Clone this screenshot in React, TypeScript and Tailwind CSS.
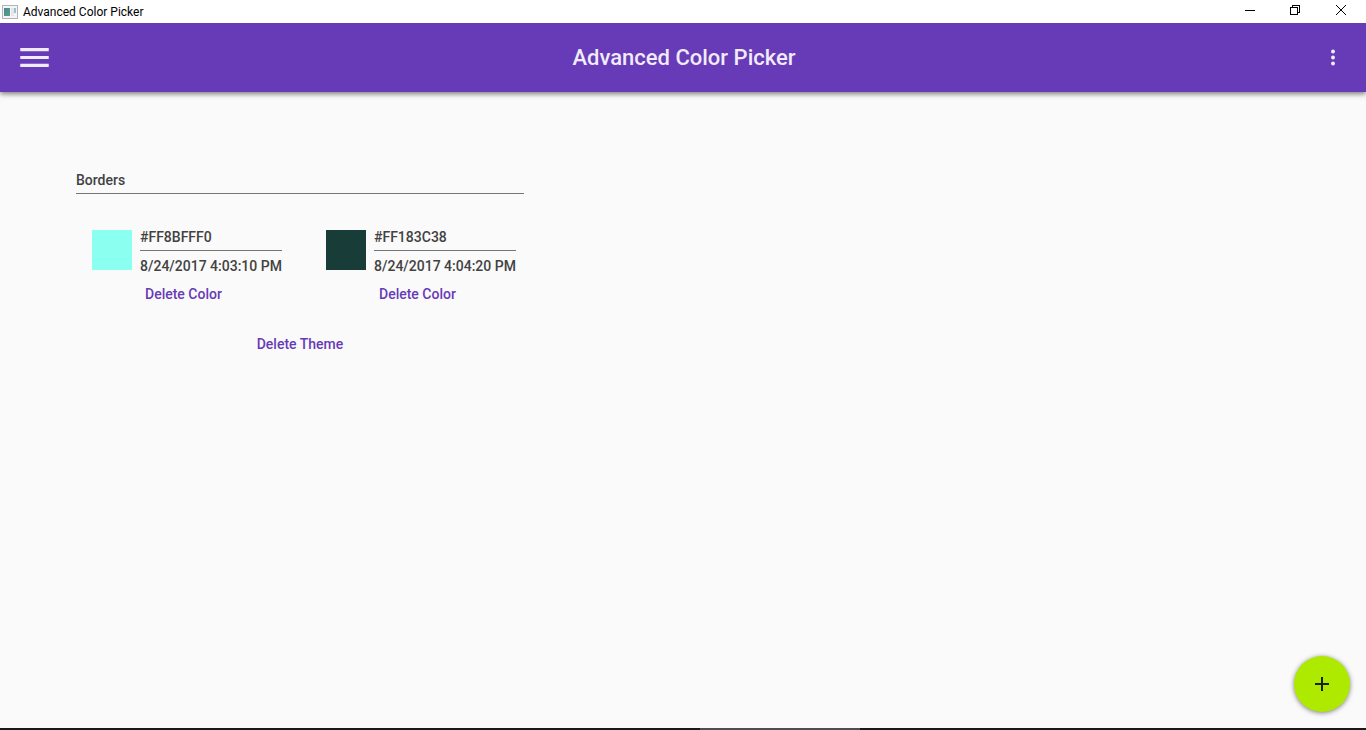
import { useState } from "react";

type Swatch = { id: string; fill: string; code: string; created: string };

const swatches: Swatch[] = [
  { id: "c1", fill: "bg-[#8bfff0]", code: "#FF8BFFF0", created: "8/24/2017 4:03:10 PM" },
  { id: "c2", fill: "bg-[#183c38]", code: "#FF183C38", created: "8/24/2017 4:04:20 PM" },
];

function AppIcon() {
  return (
    <svg width="16" height="14" viewBox="0 0 16 14" shapeRendering="crispEdges" aria-hidden="true">
      <defs>
        <linearGradient id="pane" x1="0" y1="0" x2="1" y2="1">
          <stop offset="0" stopColor="#4a83a8" />
          <stop offset="1" stopColor="#58a573" />
        </linearGradient>
      </defs>
      <rect x="0.5" y="0.5" width="15" height="13" fill="#f4f5f6" stroke="#b0b5ba" />
      <rect x="2" y="3" width="6" height="8" fill="url(#pane)" />
      <rect x="9" y="3" width="3" height="8" fill="#e4e6e9" />
      <rect x="12" y="3" width="2" height="5" fill="#9dc3c4" />
    </svg>
  );
}

function TitleBar() {
  return (
    <div className="z-20 flex h-[23px] items-start justify-between bg-white pr-[2px] pl-[2px]">
      <div className="flex h-full items-center gap-[5px]">
        <AppIcon />
        <span className="text-xs leading-4 text-black">Advanced Color Picker</span>
      </div>
      <div className="flex h-5">
        <button type="button" aria-label="Minimize" className="flex w-[45px] items-center justify-center">
          <svg width="10" height="10" viewBox="0 0 10 10" shapeRendering="crispEdges">
            <path d="M0 5.5H10" stroke="#000" />
          </svg>
        </button>
        <button type="button" aria-label="Restore" className="flex w-[46px] items-center justify-center">
          <svg width="10" height="10" viewBox="0 0 10 10" fill="none" stroke="#000" shapeRendering="crispEdges">
            <path d="M0.5 2.5H7.5V9.5H0.5ZM2.5 2.5V0.5H9.5V7.5H7.5" />
          </svg>
        </button>
        <button type="button" aria-label="Close" className="flex w-[46px] items-center justify-center">
          <svg width="10" height="10" viewBox="0 0 10 10" stroke="#000">
            <path d="M0 0L10 10M10 0L0 10" />
          </svg>
        </button>
      </div>
    </div>
  );
}

function Header() {
  return (
    <header className="z-10 grid h-[69px] grid-cols-[1fr_auto_1fr] items-center bg-[#673ab7] pr-[14px] pl-4 text-[#f0ebf8] shadow-[0_2px_5px_rgba(0,0,0,0.5)]">
      <button type="button" aria-label="Open menu" className="justify-self-start p-1">
        <svg width="29" height="19" viewBox="3 6 18 12" fill="currentColor">
          <path d="M3 18h18v-2H3v2zm0-5h18v-2H3v2zm0-7v2h18V6H3z" />
        </svg>
      </button>
      <h1 className="text-[22px] leading-7 font-medium">Advanced Color Picker</h1>
      <button type="button" aria-label="More options" className="justify-self-end px-[17px] py-2">
        <svg width="4" height="17" viewBox="0 0 4 17" fill="currentColor">
          <circle cx="2" cy="2.5" r="2" />
          <circle cx="2" cy="8.5" r="2" />
          <circle cx="2" cy="14.5" r="2" />
        </svg>
      </button>
    </header>
  );
}

function SwatchCard({ swatch }: { swatch: Swatch }) {
  const [code, setCode] = useState(swatch.code);
  return (
    <li className="flex gap-2">
      <div className={"size-10 " + swatch.fill} />
      <div className="flex w-[142px] flex-col items-start">
        <input
          aria-label="Color code"
          value={code}
          onChange={(e) => setCode(e.target.value)}
          className="h-[21px] w-full border-b border-[#757575] pb-[6px] leading-[14px] outline-none"
        />
        <span className="mt-[7px] leading-4 whitespace-nowrap">{swatch.created}</span>
        <button type="button" className="mt-3 px-[5px] leading-4 text-[#673ab7]">
          Delete Color
        </button>
      </div>
    </li>
  );
}

function ThemePanel() {
  const [name, setName] = useState("Borders");
  return (
    <section className="flex w-[448px] flex-col text-sm font-medium text-[#424242]">
      <input
        aria-label="Theme name"
        value={name}
        onChange={(e) => setName(e.target.value)}
        className="h-[22px] w-full border-b border-[#757575] pb-[6px] leading-4 outline-none"
      />
      <ul className="mt-9 flex gap-11 pl-4">
        {swatches.map((s) => (
          <SwatchCard key={s.id} swatch={s} />
        ))}
      </ul>
      <button type="button" className="mt-[34px] self-center leading-4 text-[#673ab7]">
        Delete Theme
      </button>
    </section>
  );
}

export default function App() {
  return (
    <div className="flex min-h-screen flex-col bg-[#fafafa] font-[Roboto,sans-serif]">
      <TitleBar />
      <Header />
      <main className="flex-1 px-[76px] pt-20">
        <ThemePanel />
      </main>
      <button
        type="button"
        aria-label="Add color"
        className="fixed right-4 bottom-[18px] flex size-14 items-center justify-center rounded-full bg-[#aeea00] shadow-[0_1px_5px_rgba(0,0,0,0.5)]"
      >
        <svg width="14" height="14" viewBox="0 0 14 14" shapeRendering="crispEdges">
          <path d="M6 0h2v6h6v2h-6v6h-2v-6h-6v-2h6z" fill="#1b2400" />
        </svg>
      </button>
      <footer className="flex h-[2px] justify-center bg-[#1a181c]">
        <div className="ml-[194px] w-40 bg-[#4f4d50]" />
      </footer>
    </div>
  );
}
